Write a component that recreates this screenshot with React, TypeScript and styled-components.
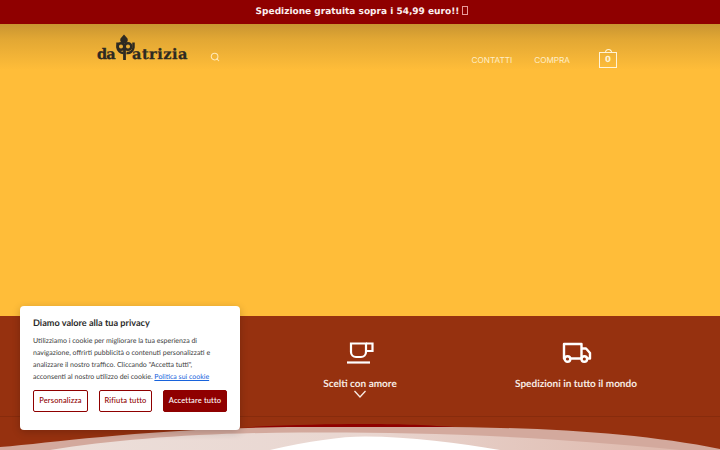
import { createGlobalStyle, styled } from 'styled-components'
import { Search } from 'lucide-react'

const GlobalStyle = createGlobalStyle`
  html, body {
    margin: 0;
    padding: 0;
    height: 450px;
    overflow: hidden;
    background: #fff;
    text-rendering: geometricPrecision;
  }
`

const Page = styled.div`
  position: relative;
  width: 720px;
  height: 450px;
  overflow: hidden;
  display: flex;
  flex-direction: column;
`

const TopBar = styled.div`
  height: 24px;
  flex: none;
  padding-left: 4px;
  background: #8f0000;
  color: #fbeeee;
  font: bold 9px/24px 'DejaVu Sans', sans-serif;
  text-align: center;
`

const MissingGlyph = styled.span`
  display: inline-block;
  box-sizing: border-box;
  width: 6px;
  height: 9px;
  margin-left: 3px;
  vertical-align: -1px;
  border: 1px solid #e79a9a;
`

const Hero = styled.div`
  height: 292px;
  flex: none;
  background: linear-gradient(#c99531 0, #e3a834 16px, #ffbd39 46px, #ffbd39 100%);
`

const Header = styled.header`
  display: flex;
  align-items: flex-start;
  height: 60px;
  padding: 9px 103px 0 97px;
`

const Logo = styled.div`
  position: relative;
  width: 92px;
  height: 30px;
  color: #2e2a22;
`

const LogoMark = styled.svg`
  position: absolute;
  left: 0;
  top: 0;
`

const LogoWord = styled.span<{ $left: number; $tight?: boolean }>`
  position: absolute;
  top: 14px;
  left: ${(props) => props.$left}px;
  font: bold 14.5px/16px 'DejaVu Serif', serif;
  letter-spacing: ${(props) => (props.$tight ? '-1px' : '0.5px')};
  -webkit-text-stroke: 0.3px currentColor;
`

const SearchButton = styled.span`
  display: flex;
  margin: 19px 0 0 21px;
  color: #ffe9b8;
`

const Nav = styled.nav`
  display: flex;
  margin-left: auto;
  padding-top: 21px;
  gap: 22px;
`

const NavLink = styled.a`
  color: #ffeec8;
  font: 8.2px/12px 'Inter', sans-serif;
`

const Cart = styled.div`
  position: relative;
  width: 16px;
  height: 14px;
  margin: 19px 0 0 29px;
  border: 1.5px solid #fff3d6;
  color: #fff3d6;
  font: bold 8.5px/14px 'DejaVu Sans', sans-serif;
  text-align: center;

  &::before {
    content: '';
    position: absolute;
    top: -4px;
    left: 4.5px;
    width: 5px;
    height: 3px;
    border: 1.5px solid #fff3d6;
    border-bottom: 0;
    border-radius: 4px 4px 0 0;
  }
`

const Band = styled.section`
  height: 101px;
  flex: none;
  box-sizing: border-box;
  padding: 0 36px;
  background: #96310f;
  border-bottom: 1px solid #872b0c;
  display: grid;
  grid-template-columns: repeat(3, 1fr);
`

const Feature = styled.div`
  position: relative;
  display: flex;
  flex-direction: column;
  align-items: center;
  padding-top: 22px;
  color: #fff;
`

const FeatureIcon = styled.svg`
  display: block;
  width: 32px;
  height: 32px;
`

const FeatureLabel = styled.div`
  margin-top: 6px;
  font: bold 10px/16px 'Lato', sans-serif;
  color: #f8ebe3;
`

const Chevron = styled.svg`
  position: absolute;
  top: 74px;
  left: 50%;
  margin-left: -7px;
  width: 14px;
  height: 8px;
`

const Wave = styled.svg`
  display: block;
  flex: none;
  width: 720px;
  height: 33px;
  background: #96310f;
`

const CookieCard = styled.aside`
  position: absolute;
  left: 20px;
  top: 306px;
  box-sizing: border-box;
  width: 220px;
  height: 124px;
  padding: 10px 13px;
  background: #fff;
  border-radius: 4px;
  box-shadow: 0 2px 8px rgba(0, 0, 0, 0.2);
  font-family: 'Lato', sans-serif;
`

const CookieTitle = styled.h2`
  margin: 0 0 5px;
  font-size: 9.15px;
  line-height: 14px;
  font-weight: 700;
  color: #2b2b2b;
`

const CookieText = styled.p`
  margin: 0;
  font-size: 7px;
  line-height: 12px;
  color: #3d3d3d;
  white-space: nowrap;
`

const CookieLink = styled.a`
  color: #1863dc;
  text-decoration: underline;
`

const ButtonRow = styled.div`
  display: flex;
  gap: 11px;
  margin-top: 7px;
`

const CookieButton = styled.button<{ $solid?: boolean; $width: number }>`
  box-sizing: border-box;
  width: ${(props) => props.$width}px;
  height: 22px;
  padding: 0;
  border: 1.5px solid #8f0000;
  border-radius: 2px;
  background: ${(props) => (props.$solid ? '#8f0000' : '#fff')};
  color: ${(props) => (props.$solid ? '#fff' : '#8f0000')};
  font: 500 7.5px/18px 'Lato', sans-serif;
  letter-spacing: 0.15px;
`

function CupIcon() {
  return (
    <FeatureIcon viewBox="0 0 32 32" fill="none" stroke="currentColor" strokeWidth="2.2">
      <path d="M7 5.500h15V14a5 5 0 0 1-5 5h-5a5 5 0 0 1-5-5z" />
      <path d="M22 5.500h6.500V13H22" />
      <path d="M3 24.500h23" />
    </FeatureIcon>
  )
}

function TruckIcon() {
  return (
    <FeatureIcon viewBox="0 0 32 32" fill="none" stroke="currentColor" strokeWidth="2.400" strokeLinejoin="round">
      <path d="M4.500 20.500H4V6h17.500v14.500H10.500" />
      <path d="M21.500 10.500H26l4 4.500v5.500h-2.500M21.500 20.500" />
      <circle cx="7.500" cy="21" r="2.800" />
      <circle cx="24.300" cy="21" r="2.800" />
    </FeatureIcon>
  )
}

export default function App() {
  return (
    <Page>
      <GlobalStyle />
      <TopBar>
        Spedizione gratuita sopra i 54,99 euro!!
        <MissingGlyph />
      </TopBar>
      <Hero>
        <Header>
          <Logo>
            <LogoMark width="92" height="30" viewBox="0 0 92 30">
              <g fill="none" stroke="currentColor" strokeWidth="2.500">
                <path d="M27 1.500l3.500 4a3.800 3.800 0 1 1-7 0z" fill="currentColor" stroke="none" />
                <circle cx="24" cy="13.500" r="3.300" />
                <circle cx="31" cy="13.500" r="3.300" />
                <path d="M20.500 9.500v5a6 6 0 0 0 6 5.500M36.500 9.500v5a6 6 0 0 1-7 5.500" />
                <path d="M27.500 14v13" strokeWidth="2.800" />
              </g>
            </LogoMark>
            <LogoWord $left={0} $tight>da</LogoWord>
            <LogoWord $left={35}>atrizia</LogoWord>
          </Logo>
          <SearchButton>
            <Search size={10} strokeWidth={2.500} />
          </SearchButton>
          <Nav>
            <NavLink>CONTATTI</NavLink>
            <NavLink>COMPRA</NavLink>
          </Nav>
          <Cart>0</Cart>
        </Header>
      </Hero>
      <Band>
        <Feature />
        <Feature>
          <CupIcon />
          <FeatureLabel>Scelti con amore</FeatureLabel>
          <Chevron viewBox="0 0 14 8" fill="none" stroke="#f8ebe3" strokeWidth="1.300">
            <path d="M1.500 1l5.500 6 5.500-6" />
          </Chevron>
        </Feature>
        <Feature>
          <TruckIcon />
          <FeatureLabel>Spedizioni in tutto il mondo</FeatureLabel>
        </Feature>
      </Band>
      <Wave viewBox="0 0 720 33">
        <defs>
          <linearGradient id="waveFill" x1="0" x2="1" y1="0" y2="0">
            <stop offset="0" stopColor="#ecdfda" />
            <stop offset="0.5" stopColor="#e9d6d0" />
            <stop offset="1" stopColor="#deb8ac" />
          </linearGradient>
        </defs>
        <path d="M240 10.500C285 8 330 7 360 7c40 0 60 .8 95 3z" fill="#8f0000" />
        <path d="M0 30C60 25 150 11 300 10h130c110 0 210 6 290 22v1H0z" fill="#d3a99d" />
        <path d="M50 33c70-11 150-17 250-17.500 100-.5 220 1.500 380 17.500z" fill="url(#waveFill)" />
        <path d="M270 33c40-9 70-13.500 95-13.500 45 0 95 6.500 135 13.500z" fill="#fff" />
      </Wave>
      <CookieCard>
        <CookieTitle>Diamo valore alla tua privacy</CookieTitle>
        <CookieText>
          Utilizziamo i cookie per migliorare la tua esperienza di
          <br />
          navigazione, offrirti pubblicità o contenuti personalizzati e
          <br />
          analizzare il nostro traffico. Cliccando "Accetta tutti",
          <br />
          acconsenti al nostro utilizzo dei cookie. <CookieLink>Politica sui cookie</CookieLink>
        </CookieText>
        <ButtonRow>
          <CookieButton $width={55}>Personalizza</CookieButton>
          <CookieButton $width={53}>Rifiuta tutto</CookieButton>
          <CookieButton $width={64} $solid>Accettare tutto</CookieButton>
        </ButtonRow>
      </CookieCard>
    </Page>
  )
}
